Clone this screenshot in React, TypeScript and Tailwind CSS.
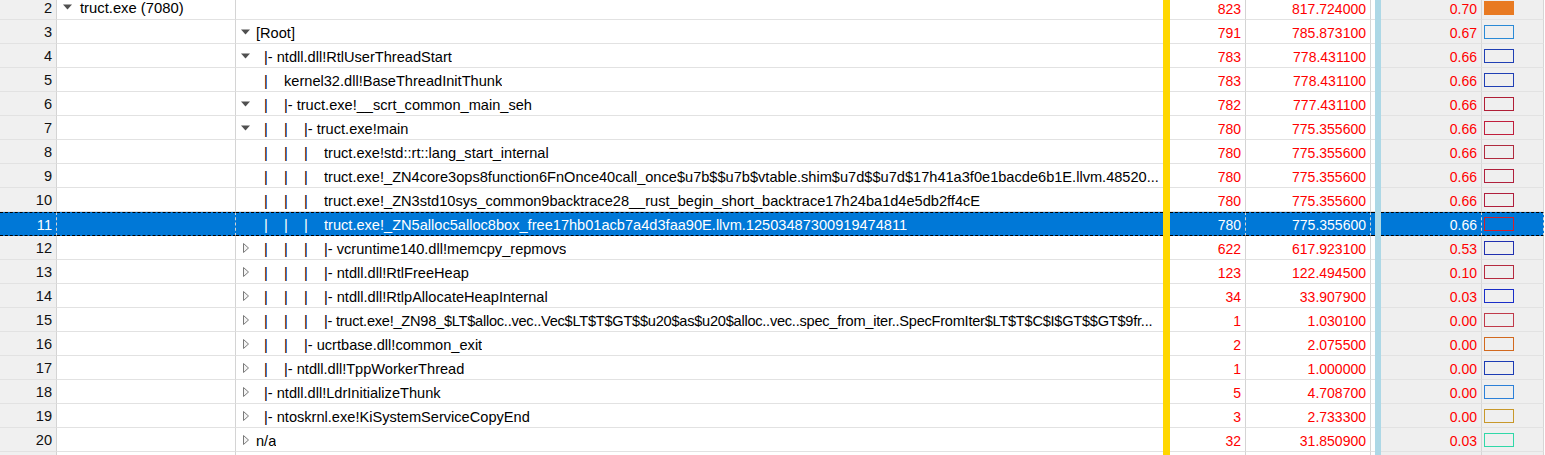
import React from 'react';

type Row = {
  n: number;
  top?: string;
  name?: string[];
  state: 'open' | 'closed' | 'none';
  count: string;
  weight: string;
  pct: string;
  swatch: string;
  filled?: boolean;
  selected?: boolean;
  tight?: boolean;
};

const P = '|';

const rows: Row[] = [
  { n: 2, top: 'truct.exe (7080)', state: 'none', count: '823', weight: '817.724000', pct: '0.70', swatch: '#e87a22', filled: true },
  { n: 3, name: ['[Root]'], state: 'open', count: '791', weight: '785.873100', pct: '0.67', swatch: '#2b8ad6' },
  { n: 4, name: ['|- ntdll.dll!RtlUserThreadStart'], state: 'open', count: '783', weight: '778.431100', pct: '0.66', swatch: '#1f3fb4' },
  { n: 5, name: [P, 'kernel32.dll!BaseThreadInitThunk'], state: 'none', count: '783', weight: '778.431100', pct: '0.66', swatch: '#1f3fb4' },
  { n: 6, name: [P, '|- truct.exe!__scrt_common_main_seh'], state: 'open', count: '782', weight: '777.431100', pct: '0.66', swatch: '#b01e36' },
  { n: 7, name: [P, P, '|- truct.exe!main'], state: 'open', count: '780', weight: '775.355600', pct: '0.66', swatch: '#c01e3c' },
  { n: 8, name: [P, P, P, 'truct.exe!std::rt::lang_start_internal'], state: 'none', count: '780', weight: '775.355600', pct: '0.66', swatch: '#b02a3e' },
  { n: 9, name: [P, P, P, 'truct.exe!_ZN4core3ops8function6FnOnce40call_once$u7b$$u7b$vtable.shim$u7d$$u7d$17h41a3f0e1bacde6b1E.llvm.48520...'], state: 'none', count: '780', weight: '775.355600', pct: '0.66', swatch: '#b0203c' },
  { n: 10, name: [P, P, P, 'truct.exe!_ZN3std10sys_common9backtrace28__rust_begin_short_backtrace17h24ba1d4e5db2ff4cE'], state: 'none', count: '780', weight: '775.355600', pct: '0.66', swatch: '#b01e3c' },
  { n: 11, name: [P, P, P, 'truct.exe!_ZN5alloc5alloc8box_free17hb01acb7a4d3faa90E.llvm.12503487300919474811'], state: 'none', count: '780', weight: '775.355600', pct: '0.66', swatch: '#d4202c', selected: true },
  { n: 12, name: [P, P, P, '|- vcruntime140.dll!memcpy_repmovs'], state: 'closed', count: '622', weight: '617.923100', pct: '0.53', swatch: '#2030b0' },
  { n: 13, name: [P, P, P, '|- ntdll.dll!RtlFreeHeap'], state: 'closed', count: '123', weight: '122.494500', pct: '0.10', swatch: '#b52a3f' },
  { n: 14, name: [P, P, P, '|- ntdll.dll!RtlpAllocateHeapInternal'], state: 'closed', count: '34', weight: '33.907900', pct: '0.03', swatch: '#1a2ec8' },
  { n: 15, name: [P, P, P, '|- truct.exe!_ZN98_$LT$alloc..vec..Vec$LT$T$GT$$u20$as$u20$alloc..vec..spec_from_iter..SpecFromIter$LT$T$C$I$GT$$GT$9fr...'], state: 'closed', count: '1', weight: '1.030100', pct: '0.00', swatch: '#c03a4a', tight: true },
  { n: 16, name: [P, P, '|- ucrtbase.dll!common_exit'], state: 'closed', count: '2', weight: '2.075500', pct: '0.00', swatch: '#d2691e' },
  { n: 17, name: [P, '|- ntdll.dll!TppWorkerThread'], state: 'closed', count: '1', weight: '1.000000', pct: '0.00', swatch: '#1c3cb4' },
  { n: 18, name: ['|- ntdll.dll!LdrInitializeThunk'], state: 'closed', count: '5', weight: '4.708700', pct: '0.00', swatch: '#2c80d8' },
  { n: 19, name: ['|- ntoskrnl.exe!KiSystemServiceCopyEnd'], state: 'closed', count: '3', weight: '2.733300', pct: '0.00', swatch: '#c8982a' },
  { n: 20, name: ['n/a'], state: 'closed', count: '32', weight: '31.850900', pct: '0.03', swatch: '#30d8a8' },
];

function Toggle({ state }: { state: Row['state'] }) {
  if (state === 'open') {
    return (
      <svg width="9" height="6" viewBox="0 0 9 6" className="shrink-0 -mt-[2px]">
        <path d="M0 0.5 H9 L4.5 5.5 Z" fill="#505050" />
      </svg>
    );
  }
  if (state === 'closed') {
    return (
      <svg width="9" height="10" viewBox="0 0 9 10" className="shrink-0 -mt-[2px]">
        <path d="M2.5 0.5 L7.5 5 L2.5 9.5 Z" fill="#f4f4f4" stroke="#7a7a7a" strokeWidth="1" />
      </svg>
    );
  }
  return <span className="w-[9px] shrink-0" />;
}

function TreeName({ row }: { row: Row }) {
  if (!row.name) return null;
  const rooted = row.name[0] === '[Root]' || row.name[0] === 'n/a';
  const last = row.name[row.name.length - 1];
  const pipes = row.name.slice(0, -1);
  return (
    <div className="flex items-center pl-[5px] min-w-0">
      <div className="w-[9px] shrink-0 flex justify-center">
        <Toggle state={row.state} />
      </div>
      {rooted ? (
        <span className="pl-[6px] truncate leading-[20px]">{last}</span>
      ) : (
        <div className="flex pl-[14px] min-w-0 leading-[20px]">
          {pipes.map((p, i) => (
            <span key={i} className="w-[20px] shrink-0">
              {p}
            </span>
          ))}
          <span className={`truncate ${row.tight ? 'tracking-[-0.25px]' : ''}`}>{last}</span>
        </div>
      )}
    </div>
  );
}

function Swatch({ color, filled }: { color: string; filled?: boolean }) {
  return (
    <svg width="30" height="14" viewBox="0 0 30 14" className="block shrink-0">
      <rect
        x="0.5"
        y="0.5"
        width="29"
        height="13"
        fill={filled ? color : 'none'}
        stroke={color}
        strokeWidth="1"
      />
    </svg>
  );
}

function TableRow({ row }: { row?: Row }) {
  const sel = row?.selected;
  const line = sel ? 'border-y border-dashed border-black' : 'border-b border-[#e2e2e2]';
  const base = sel ? 'bg-[#0078d7] text-white' : 'bg-white';
  const gray = sel ? 'bg-[#0078d7] text-white' : 'bg-[#efefef]';
  const red = sel ? 'text-white' : 'text-[#ff0000]';
  const cell = 'flex items-center pt-[2px]';

  return (
    <div className="flex h-6 shrink-0">
      <div className={`w-[57px] shrink-0 ${cell} justify-end pr-[4px] border-r border-r-[#d4d4d4] ${line} ${sel ? 'bg-[#0078d7] text-white' : 'bg-[#f0f0f0] text-[#111]'}`}>
        {row?.n}
      </div>
      <div className={`w-[179px] shrink-0 ${cell} border-r border-r-[#d4d4d4] ${line} ${base}`}>
        {row?.top && (
          <div className="flex items-center pl-[6px] gap-[8px]">
            <Toggle state="open" />
            <span className="text-[14.8px]">{row.top}</span>
          </div>
        )}
      </div>
      <div className={`w-[927px] shrink-0 ${cell} overflow-hidden ${line} ${base}`}>
        {row && <TreeName row={row} />}
      </div>
      <div className="w-[7px] shrink-0 bg-[#ffd700]" />
      <div className={`w-[76px] shrink-0 ${cell} justify-end pr-[4px] text-[14px] border-r border-r-[#d4d4d4] ${line} ${base} ${red}`}>
        {row?.count}
      </div>
      <div className={`w-[125px] shrink-0 ${cell} justify-end pr-[4px] text-[14px] border-r border-r-[#d4d4d4] ${line} ${base} ${red}`}>
        {row?.weight}
      </div>
      <div className={`w-[4px] shrink-0 ${line} ${base}`} />
      <div className="w-[6px] shrink-0 bg-[#add8e6]" />
      <div className={`w-[101px] shrink-0 ${cell} justify-end pr-[4px] text-[14px] border-r border-r-[#d6d6d6] ${line} ${gray} ${red}`}>
        {row?.pct}
      </div>
      <div className={`w-[62px] shrink-0 flex items-center pl-[2px] border-r border-r-[#d6d6d6] ${line} ${gray}`}>
        {row && <Swatch color={row.swatch} filled={row.filled} />}
      </div>
      <div className="flex-1 bg-white" />
    </div>
  );
}

export default function App() {
  return (
    <div className="w-[1545px] h-[455px] overflow-hidden bg-white text-black text-[14.6px] leading-none font-['Liberation_Sans',Arial,sans-serif]">
      <div className="flex flex-col -mt-[4px]">
        {rows.map((row) => (
          <TableRow key={row.n} row={row} />
        ))}
        <TableRow />
      </div>
    </div>
  );
}
